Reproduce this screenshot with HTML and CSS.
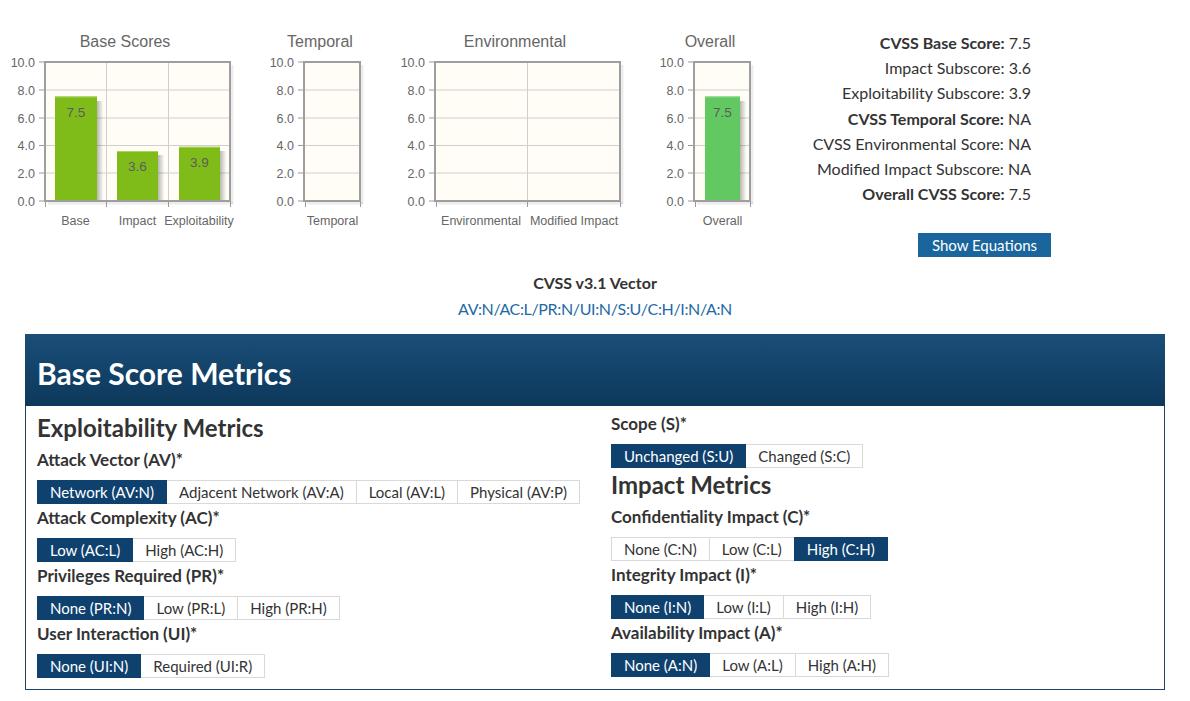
FILE: index.html
```html
<!DOCTYPE html>
<html>
<head>
<meta charset="utf-8">
<link rel="stylesheet" href="styles.css">
</head>
<body>
<div class="top">
  <div class="charts">
    <svg class="chart" width="245" height="205" viewBox="0 25 245 205">
      <defs>
        <linearGradient id="sh" x1="0" x2="1" y1="0" y2="0">
          <stop offset="0" stop-color="#000" stop-opacity="0.28"/>
          <stop offset="1" stop-color="#000" stop-opacity="0.02"/>
        </linearGradient>
      </defs>
      <text class="ct" x="125" y="47">Base Scores</text>
      <rect x="45" y="62" width="185" height="139" fill="#fffdf6"/>
      <g class="grid">
        <line x1="45" x2="230" y1="90" y2="90"/><line x1="45" x2="230" y1="118" y2="118"/>
        <line x1="45" x2="230" y1="145.5" y2="145.5"/><line x1="45" x2="230" y1="173" y2="173"/>
        <line x1="106.5" x2="106.5" y1="62" y2="201"/><line x1="168.5" x2="168.5" y1="62" y2="201"/>
      </g>
      <rect x="97" y="101" width="6" height="100" fill="url(#sh)"/>
      <rect x="55" y="96.5" width="42" height="104.5" class="bar"/>
      <line x1="55" x2="97" y1="97" y2="97" class="bartop"/>
      <text class="bl" x="76" y="117">7.5</text>
      <rect x="158" y="155" width="6" height="46" fill="url(#sh)"/>
      <rect x="117" y="151" width="41" height="50" class="bar"/>
      <line x1="117" x2="158" y1="151.5" y2="151.5" class="bartop"/>
      <text class="bl" x="137.5" y="171">3.6</text>
      <rect x="220" y="151" width="6" height="50" fill="url(#sh)"/>
      <rect x="179" y="146.8" width="41" height="54.2" class="bar"/>
      <line x1="179" x2="220" y1="147.3" y2="147.3" class="bartop"/>
      <text class="bl" x="199.5" y="167">3.9</text>
      <line x1="232" x2="232" y1="65" y2="204" class="bsh"/><line x1="48" x2="233" y1="203" y2="203" class="bsh"/>
      <rect x="45" y="62" width="185" height="139" class="frame"/>
      <g class="tick">
        <line x1="39" x2="44" y1="62" y2="62"/><line x1="39" x2="44" y1="90" y2="90"/><line x1="39" x2="44" y1="118" y2="118"/>
        <line x1="39" x2="44" y1="145.5" y2="145.5"/><line x1="39" x2="44" y1="173" y2="173"/><line x1="39" x2="44" y1="201" y2="201"/>
        <line x1="45.5" x2="45.5" y1="202" y2="207"/><line x1="106.5" x2="106.5" y1="202" y2="207"/>
        <line x1="168.5" x2="168.5" y1="202" y2="207"/><line x1="230.5" x2="230.5" y1="202" y2="207"/>
      </g>
      <g class="yl">
        <text x="35" y="66.5">10.0</text><text x="35" y="94.5">8.0</text><text x="35" y="122.5">6.0</text>
        <text x="35" y="150">4.0</text><text x="35" y="177.5">2.0</text><text x="35" y="205.5">0.0</text>
      </g>
      <g class="xl">
        <text x="75.5" y="224.5">Base</text><text x="137.5" y="224.5">Impact</text><text x="199" y="224.5">Exploitability</text>
      </g>
    </svg>

    <svg class="chart c2" width="115" height="205" viewBox="255 25 115 205">
      <text class="ct" x="320" y="47">Temporal</text>
      <rect x="304" y="62" width="56" height="139" fill="#fffdf6"/>
      <g class="grid">
        <line x1="304" x2="360" y1="90" y2="90"/><line x1="304" x2="360" y1="118" y2="118"/>
        <line x1="304" x2="360" y1="145.5" y2="145.5"/><line x1="304" x2="360" y1="173" y2="173"/>
      </g>
      <line x1="362" x2="362" y1="65" y2="204" class="bsh"/><line x1="307" x2="363" y1="203" y2="203" class="bsh"/>
      <rect x="304" y="62" width="56" height="139" class="frame"/>
      <g class="tick">
        <line x1="298" x2="303" y1="62" y2="62"/><line x1="298" x2="303" y1="90" y2="90"/><line x1="298" x2="303" y1="118" y2="118"/>
        <line x1="298" x2="303" y1="145.5" y2="145.5"/><line x1="298" x2="303" y1="173" y2="173"/><line x1="298" x2="303" y1="201" y2="201"/>
        <line x1="305.5" x2="305.5" y1="202" y2="207"/><line x1="360.5" x2="360.5" y1="202" y2="207"/>
      </g>
      <g class="yl">
        <text x="294" y="66.5">10.0</text><text x="294" y="94.5">8.0</text><text x="294" y="122.5">6.0</text>
        <text x="294" y="150">4.0</text><text x="294" y="177.5">2.0</text><text x="294" y="205.5">0.0</text>
      </g>
      <g class="xl"><text x="332.5" y="224.5">Temporal</text></g>
    </svg>

    <svg class="chart c3" width="250" height="205" viewBox="385 25 250 205">
      <text class="ct" x="515" y="47">Environmental</text>
      <rect x="435" y="62" width="185" height="139" fill="#fffdf6"/>
      <g class="grid">
        <line x1="435" x2="620" y1="90" y2="90"/><line x1="435" x2="620" y1="118" y2="118"/>
        <line x1="435" x2="620" y1="145.5" y2="145.5"/><line x1="435" x2="620" y1="173" y2="173"/>
        <line x1="527.5" x2="527.5" y1="62" y2="201"/>
      </g>
      <line x1="622" x2="622" y1="65" y2="204" class="bsh"/><line x1="438" x2="623" y1="203" y2="203" class="bsh"/>
      <rect x="435" y="62" width="185" height="139" class="frame"/>
      <g class="tick">
        <line x1="429" x2="434" y1="62" y2="62"/><line x1="429" x2="434" y1="90" y2="90"/><line x1="429" x2="434" y1="118" y2="118"/>
        <line x1="429" x2="434" y1="145.5" y2="145.5"/><line x1="429" x2="434" y1="173" y2="173"/><line x1="429" x2="434" y1="201" y2="201"/>
        <line x1="436.5" x2="436.5" y1="202" y2="207"/><line x1="527.5" x2="527.5" y1="202" y2="207"/><line x1="620.5" x2="620.5" y1="202" y2="207"/>
      </g>
      <g class="yl">
        <text x="425" y="66.5">10.0</text><text x="425" y="94.5">8.0</text><text x="425" y="122.5">6.0</text>
        <text x="425" y="150">4.0</text><text x="425" y="177.5">2.0</text><text x="425" y="205.5">0.0</text>
      </g>
      <g class="xl"><text x="481" y="224.5">Environmental</text><text x="574" y="224.5">Modified Impact</text></g>
    </svg>

    <svg class="chart c4" width="115" height="205" viewBox="645 25 115 205">
      <defs>
        <linearGradient id="sh2" x1="0" x2="1" y1="0" y2="0">
          <stop offset="0" stop-color="#000" stop-opacity="0.28"/>
          <stop offset="1" stop-color="#000" stop-opacity="0.02"/>
        </linearGradient>
      </defs>
      <text class="ct" x="710" y="47">Overall</text>
      <rect x="694" y="62" width="56" height="139" fill="#fffdf6"/>
      <g class="grid">
        <line x1="694" x2="750" y1="90" y2="90"/><line x1="694" x2="750" y1="118" y2="118"/>
        <line x1="694" x2="750" y1="145.5" y2="145.5"/><line x1="694" x2="750" y1="173" y2="173"/>
      </g>
      <rect x="740" y="101" width="6" height="100" fill="url(#sh2)"/>
      <rect x="705" y="96.5" width="35" height="104.5" class="bar2"/>
      <line x1="705" x2="740" y1="97" y2="97" class="bartop2"/>
      <text class="bl" x="722.5" y="117">7.5</text>
      <line x1="752" x2="752" y1="65" y2="204" class="bsh"/><line x1="697" x2="753" y1="203" y2="203" class="bsh"/>
      <rect x="694" y="62" width="56" height="139" class="frame"/>
      <g class="tick">
        <line x1="688" x2="693" y1="62" y2="62"/><line x1="688" x2="693" y1="90" y2="90"/><line x1="688" x2="693" y1="118" y2="118"/>
        <line x1="688" x2="693" y1="145.5" y2="145.5"/><line x1="688" x2="693" y1="173" y2="173"/><line x1="688" x2="693" y1="201" y2="201"/>
        <line x1="695.5" x2="695.5" y1="202" y2="207"/><line x1="750.5" x2="750.5" y1="202" y2="207"/>
      </g>
      <g class="yl">
        <text x="684" y="66.5">10.0</text><text x="684" y="94.5">8.0</text><text x="684" y="122.5">6.0</text>
        <text x="684" y="150">4.0</text><text x="684" y="177.5">2.0</text><text x="684" y="205.5">0.0</text>
      </g>
      <g class="xl"><text x="722.5" y="224.5">Overall</text></g>
    </svg>
  </div>

  <div class="scores">
    <div class="lines">
      <div><b>CVSS Base Score:</b> 7.5</div>
      <div>Impact Subscore: 3.6</div>
      <div>Exploitability Subscore: 3.9</div>
      <div><b>CVSS Temporal Score:</b> NA</div>
      <div>CVSS Environmental Score: NA</div>
      <div>Modified Impact Subscore: NA</div>
      <div><b>Overall CVSS Score:</b> 7.5</div>
    </div>
    <button class="eq">Show Equations</button>
  </div>
</div>

<div class="vector">
  <div class="vtitle">CVSS v3.1 Vector</div>
  <a class="vlink" href="#">AV:N/AC:L/PR:N/UI:N/S:U/C:H/I:N/A:N</a>
</div>

<div class="panel">
  <div class="phead">Base Score Metrics</div>
  <div class="pbody">
    <div class="col left">
      <h3 class="heading">Exploitability Metrics</h3>
      <div class="label">Attack Vector (AV)*</div>
      <div class="group"><span class="opt on">Network (AV:N)</span><span class="opt">Adjacent Network (AV:A)</span><span class="opt">Local (AV:L)</span><span class="opt">Physical (AV:P)</span></div>
      <div class="label">Attack Complexity (AC)*</div>
      <div class="group"><span class="opt on">Low (AC:L)</span><span class="opt">High (AC:H)</span></div>
      <div class="label">Privileges Required (PR)*</div>
      <div class="group"><span class="opt on">None (PR:N)</span><span class="opt">Low (PR:L)</span><span class="opt">High (PR:H)</span></div>
      <div class="label">User Interaction (UI)*</div>
      <div class="group"><span class="opt on">None (UI:N)</span><span class="opt">Required (UI:R)</span></div>
    </div>
    <div class="col right">
      <div class="label">Scope (S)*</div>
      <div class="group"><span class="opt on">Unchanged (S:U)</span><span class="opt">Changed (S:C)</span></div>
      <h3 class="heading">Impact Metrics</h3>
      <div class="label">Confidentiality Impact (C)*</div>
      <div class="group"><span class="opt">None (C:N)</span><span class="opt">Low (C:L)</span><span class="opt on">High (C:H)</span></div>
      <div class="label">Integrity Impact (I)*</div>
      <div class="group"><span class="opt on">None (I:N)</span><span class="opt">Low (I:L)</span><span class="opt">High (I:H)</span></div>
      <div class="label">Availability Impact (A)*</div>
      <div class="group"><span class="opt on">None (A:N)</span><span class="opt">Low (A:L)</span><span class="opt">High (A:H)</span></div>
    </div>
  </div>
</div>
</body>
</html>
```

FILE: styles.css
```css
* { box-sizing: border-box; }
body {
  margin: 0;
  background: #fff;
  font-family: Lato, "Open Sans", sans-serif;
  color: #333;
}
.top {
  display: flex;
  padding-top: 25px;
  height: 265px;
}
.charts { display: flex; }
.chart { display: block; overflow: visible; }
.c2 { margin-left: 10px; }
.c3 { margin-left: 15px; }
.c4 { margin-left: 10px; }
.chart text { font-family: "Liberation Sans", Arial, sans-serif; fill: #666; }
.ct { font-size: 16px; text-anchor: middle; }
.yl text { font-size: 12.5px; text-anchor: end; }
.xl text { font-size: 12.5px; text-anchor: middle; }
.chart .bl { font-size: 13.5px; text-anchor: middle; fill: #5c5c5c; }
.grid line { stroke: #cfcfcf; stroke-width: 1; }
.tick line { stroke: #9a9a9a; stroke-width: 1; }
.frame { fill: none; stroke: #9e9e9e; stroke-width: 2; }
.bsh { stroke: #000; stroke-opacity: 0.07; stroke-width: 3; }
.bar { fill: #7fbc1a; }
.bartop { stroke: #a8d45a; stroke-width: 1; }
.bar2 { fill: #62c862; }
.bartop2 { stroke: #8ad88a; stroke-width: 1; }

.scores {
  width: 291px;
  display: flex;
  flex-direction: column;
  align-items: flex-end;
}
.lines {
  padding-top: 5px;
  padding-right: 20px;
  text-align: right;
  font-size: 16px;
  line-height: 25.2px;
  color: #333;
}
.lines b { font-weight: 700; }
.eq {
  margin-top: 27px;
  width: 133px;
  height: 24px;
  border: 0;
  padding: 0;
  background: #1a659c;
  color: #fff;
  font-family: inherit;
  font-size: 15px;
}

.vector {
  text-align: center;
  font-size: 16px;
  line-height: 26px;
  padding-top: 5px;
}
.vtitle { font-weight: 700; color: #333; }
.vlink { color: #1f6aa5; text-decoration: none; letter-spacing: -0.35px; }

.panel {
  margin: 12px 25px 0 25px;
  border: 1px solid #1d4466;
  height: 356px;
}
.phead {
  height: 72px;
  margin: -1px -1px 0 -1px;
  background: linear-gradient(#1a4e79, #0d385b);
  color: #fff;
  font-weight: 700;
  font-size: 30px;
  padding-left: 12px;
  line-height: 78px;
}
.pbody {
  display: grid;
  grid-template-columns: 574px 1fr;
  padding: 4px 0 0 11px;
}
.heading {
  margin: 3px 0 7px 0;
  font-size: 24px;
  line-height: 28px;
  font-weight: 700;
  color: #333;
}
.left .heading { margin-top: 4px; }
.label {
  margin-top: 3px;
  margin-bottom: 9px;
  line-height: 22px;
  font-size: 17px;
  font-weight: 700;
  color: #333;
}
.group { display: flex; }
.opt {
  height: 24px;
  line-height: 22px;
  padding: 0 12px;
  border: 1px solid #d9d9d9;
  margin-left: -1px;
  font-size: 15px;
  color: #333;
  background: #fff;
  white-space: nowrap;
}
.opt:first-child { margin-left: 0; }
.opt.on {
  background: #0f416f;
  border-color: #0f416f;
  color: #fff;
  position: relative;
}
```
